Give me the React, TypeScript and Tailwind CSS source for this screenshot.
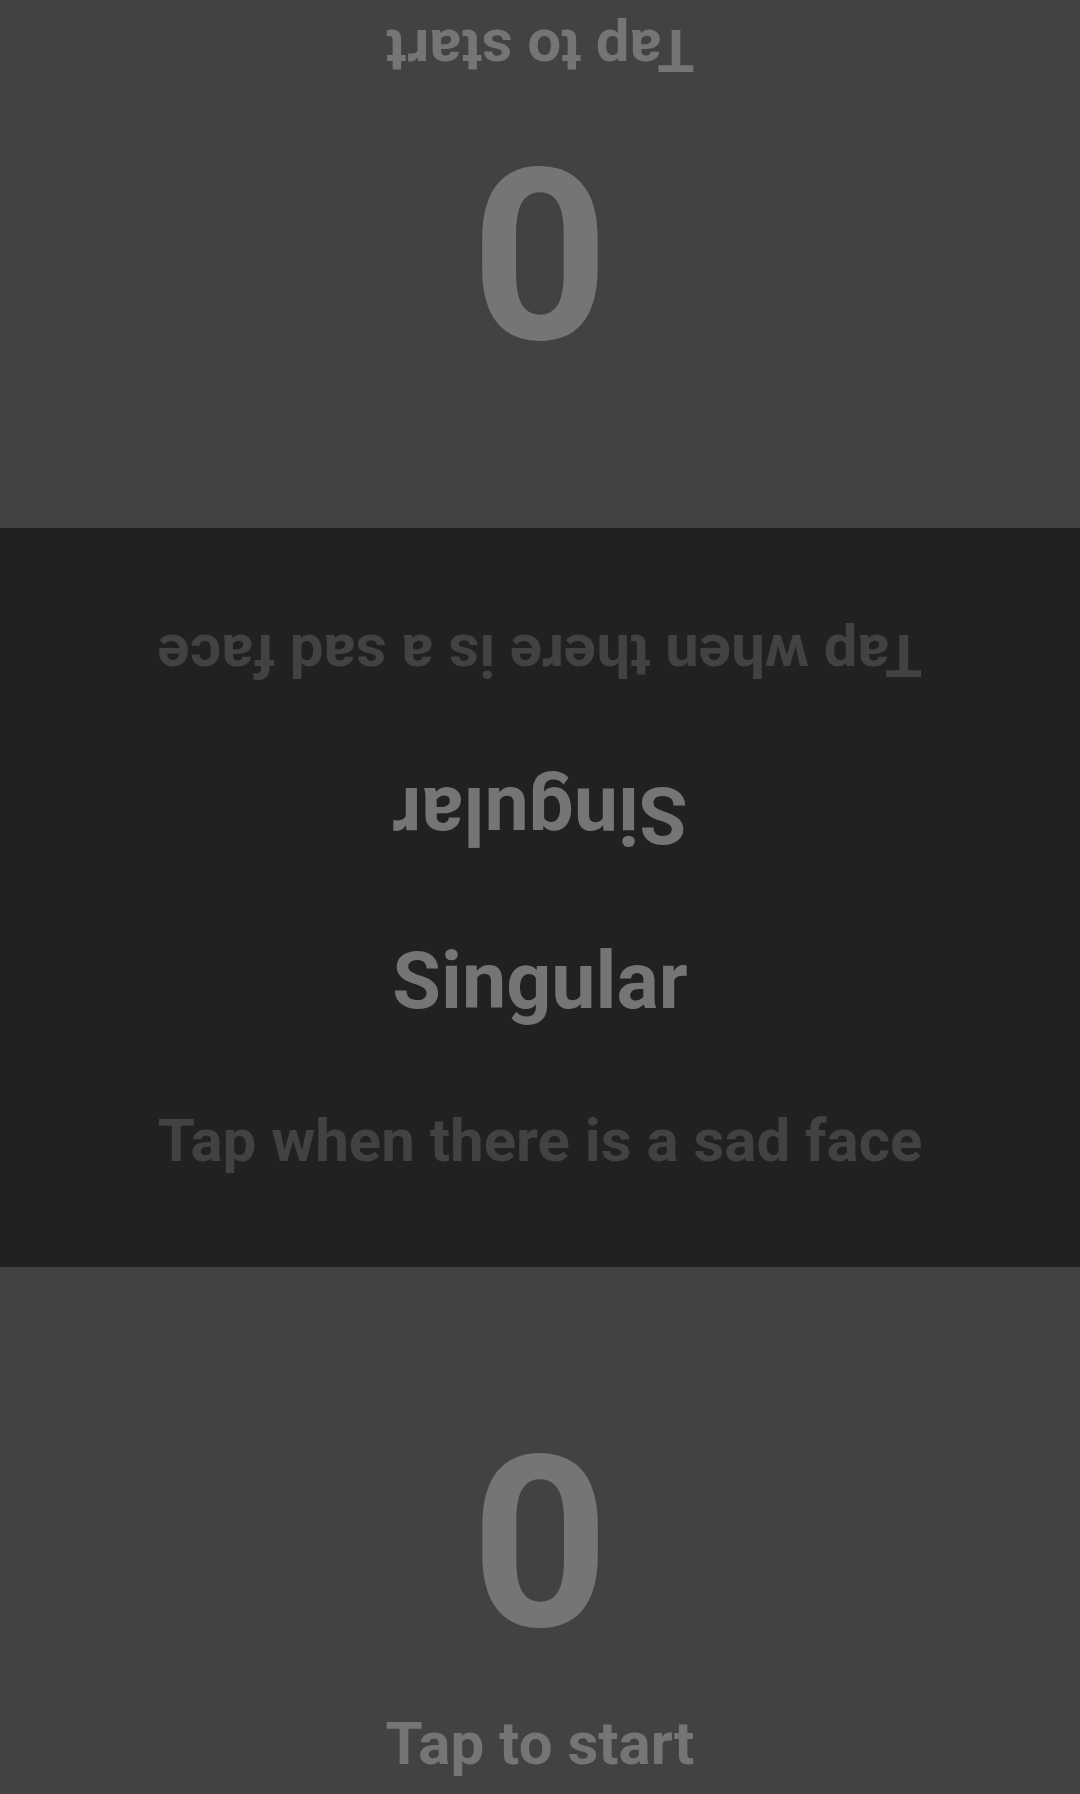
import React from "react";

function PlayerPanel({ flipped, h }: { flipped?: boolean; h: string }) {
  return (
    <div className={`${h} w-full bg-[#424242] ${flipped ? "rotate-180" : ""}`}>
      <div className="flex h-full flex-col items-center justify-end pb-[20px]">
        <div className="text-[240px] leading-none font-bold text-[#757575]">0</div>
        <div className="mt-[50px] text-[60px] leading-none font-bold text-[#757575]">Tap to start</div>
      </div>
    </div>
  );
}

function MiddleHalf({ flipped }: { flipped?: boolean }) {
  return (
    <div className={`flex flex-1 flex-col items-center pt-[44px] ${flipped ? "rotate-180" : ""}`}>
      <div className="text-[79px] leading-none font-bold text-[#757575]">Singular</div>
      <div className="mt-[90px] text-[60px] leading-none font-bold text-[#424242]">Tap when there is a sad face</div>
    </div>
  );
}

export default function App() {
  return (
    <div
      className="flex h-[1794px] w-[1080px] flex-col overflow-hidden select-none"
      style={{ fontFamily: "Roboto, 'Liberation Sans', sans-serif" }}
    >
      <PlayerPanel flipped h="h-[528px]" />
      <div className="flex h-[739px] w-full flex-col bg-[#212121]">
        <MiddleHalf flipped />
        <MiddleHalf />
      </div>
      <PlayerPanel h="h-[527px]" />
    </div>
  );
}
